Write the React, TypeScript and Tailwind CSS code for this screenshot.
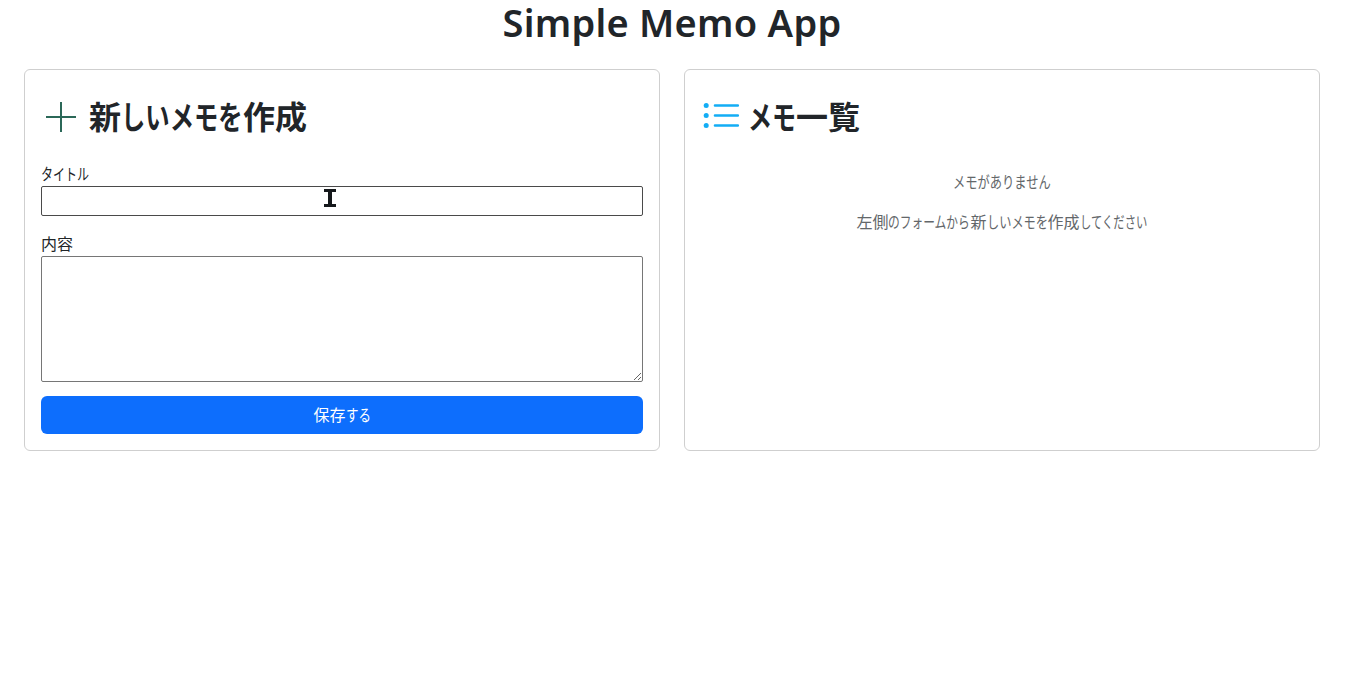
import { useState } from "react";

function Squeeze({ text, outer, inner }: { text: string; outer: string; inner: string }) {
  return (
    <span className={`inline-block whitespace-nowrap ${outer}`}>
      <span className={`inline-block origin-left ${inner}`}>{text}</span>
    </span>
  );
}

const PlusIcon = () => (
  <svg className="h-10 w-10 shrink-0" viewBox="0 0 40 40" fill="none" stroke="#2b6858" strokeWidth="2">
    <path d="M5 20H35M20 5V35" />
  </svg>
);

const ListIcon = () => (
  <svg className="h-10 w-10 shrink-0" viewBox="0 0 40 40" fill="#13adf5">
    <circle cx="5.2" cy="8.5" r="2.5" />
    <circle cx="5.2" cy="18.5" r="2.5" />
    <circle cx="5.2" cy="28.5" r="2.5" />
    <path d="M14 8.5H36.8M14 18.5H36.8M14 28.5H36.8" stroke="#13adf5" strokeWidth="2.6" strokeLinecap="round" />
  </svg>
);

export default function App() {
  const [title, setTitle] = useState("");
  const [body, setBody] = useState("");
  return (
    <div className="min-h-screen bg-white pr-[29px] pl-6 font-['Noto_Sans','Noto_Sans_CJK_JP',sans-serif] text-base text-[#212529]">
      <h1 className="h-12 text-center text-[38px] leading-[44px] font-semibold tracking-[0.25px]">Simple Memo App</h1>
      <main className="mt-[21px] grid grid-cols-2 gap-6">
        <section className="h-[382px] rounded-md border border-[#cfcfcf] px-4">
          <h2 className="mt-[27px] flex h-10 items-center gap-2 font-['Noto_Sans_CJK_JP',sans-serif] text-[32px] leading-10 font-bold">
            <PlusIcon />
            <span className="flex pb-1 whitespace-nowrap">
              新
              <Squeeze text="しいメモを" outer="w-[122px]" inner="scale-x-[0.76]" />
              作成
            </span>
          </h2>
          <label className="mt-6 block h-[25px] font-['Noto_Sans_CJK_JP',sans-serif] leading-6" htmlFor="title">
            <Squeeze text="タイトル" outer="w-12" inner="scale-x-75" />
          </label>
          <div className="relative h-[30px]">
            <input id="title" value={title} onChange={(e) => setTitle(e.target.value)} className="block h-[30px] w-full rounded-xs border border-[#4a4a4a] px-1 outline-none" />
            <svg className="pointer-events-none absolute top-[3px] left-[283px] h-[18px] w-3" viewBox="0 0 12 18" fill="#15181b">
              <path d="M0 0H12V3H8V15H12V18H0V15H4V3H0Z" />
            </svg>
          </div>
          <label className="mt-[15px] block h-[25px] font-['Noto_Sans_CJK_JP',sans-serif] leading-6" htmlFor="body">内容</label>
          <textarea id="body" value={body} onChange={(e) => setBody(e.target.value)} className="block h-[126px] w-full rounded-xs border border-[#767676] px-1 outline-none" />
          <button className="mt-[14px] flex h-[38px] w-full items-center justify-center rounded-md bg-[#0d6efd] pb-0.5 font-['Noto_Sans_CJK_JP',sans-serif] text-base leading-6 text-white">
            保存
            <Squeeze text="する" outer="w-[25px]" inner="scale-x-[0.78]" />
          </button>
        </section>
        <section className="h-[382px] rounded-md border border-[#cfcfcf] px-4">
          <h2 className="mt-[27px] flex h-10 items-center gap-[7px] font-['Noto_Sans_CJK_JP',sans-serif] text-[32px] leading-10 font-bold">
            <ListIcon />
            <span className="flex pb-1 whitespace-nowrap">
              <Squeeze text="メモ" outer="w-12" inner="scale-x-75" />
              一覧
            </span>
          </h2>
          <div className="mt-8 flex flex-col items-center gap-4 font-['Noto_Sans_CJK_JP',sans-serif] leading-6 text-[#63676a]">
            <p className="h-6">
              <Squeeze text="メモがありません" outer="w-[98px]" inner="scale-x-[0.766]" />
            </p>
            <p className="flex h-6 whitespace-nowrap">
              左側
              <Squeeze text="のフォームから" outer="w-[82px]" inner="scale-x-[0.732]" />
              新
              <Squeeze text="しいメモを" outer="w-[61px]" inner="scale-x-[0.7625]" />
              作成
              <Squeeze text="してください" outer="w-[68px]" inner="scale-x-[0.708]" />
            </p>
          </div>
        </section>
      </main>
    </div>
  );
}
